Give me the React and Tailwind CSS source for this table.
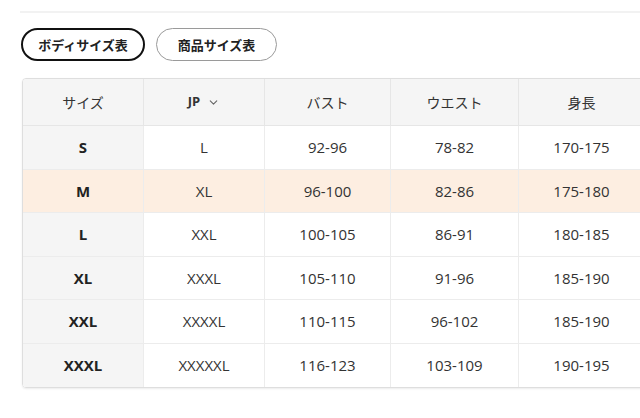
import { ChevronDown } from "lucide-react";

const rows = [
  ["S", "L", "92-96", "78-82", "170-175"],
  ["M", "XL", "96-100", "82-86", "175-180"],
  ["L", "XXL", "100-105", "86-91", "180-185"],
  ["XL", "XXXL", "105-110", "91-96", "185-190"],
  ["XXL", "XXXXL", "110-115", "96-102", "185-190"],
  ["XXXL", "XXXXXL", "116-123", "103-109", "190-195"],
];

const widths = ["w-[121px]", "w-[121px]", "w-[126px]", "w-[128px]", "w-[126px]"];

export default function App() {
  return (
    <div className="w-[640px] h-[418px] overflow-hidden bg-white text-[#333] font-['Open_Sans','Noto_Sans_CJK_JP',sans-serif]">
      <div className="pt-[11px] pl-[20px]">
        <div className="h-[2px] bg-[#f2f2f2]" />
      </div>

      <div className="flex gap-[11px] pl-[21px] pt-[15px]">
        <button className="h-[33px] w-[124px] rounded-full border-2 border-[#111] text-[13px] font-bold text-[#222] font-['Noto_Sans_CJK_JP',sans-serif]">
          ボディサイズ表
        </button>
        <button className="h-[33px] w-[121px] rounded-full border border-[#9a9a9a] text-[13px] font-bold text-[#222] font-['Noto_Sans_CJK_JP',sans-serif]">
          商品サイズ表
        </button>
      </div>

      <div className="pl-[22px] pt-[17px]">
        <div className="w-[700px] rounded-[4px] border border-[#dedede] shadow-[0_1px_2px_rgba(0,0,0,0.08)] overflow-hidden">
          <div className="flex h-[47px] bg-[#f5f5f5] border-b border-[#e6e6e6] text-[14px]">
            {["サイズ", "JP", "バスト", "ウエスト", "身長"].map((h, i) => (
              <div
                key={h}
                className={`${widths[i]} shrink-0 flex items-center justify-center gap-[7px] border-r border-[#e6e6e6] font-['Noto_Sans_CJK_JP',sans-serif] text-[#333] ${i === 1 ? "font-bold" : "font-normal"}`}
              >
                <span className={i === 1 ? "font-['Open_Sans',sans-serif] text-[13px]" : ""}>{h}</span>
                {i === 1 && <ChevronDown className="w-[13px] h-[13px] text-[#666]" strokeWidth={2} />}
              </div>
            ))}
          </div>
          {rows.map((r, ri) => (
            <div
              key={r[0]}
              className={`flex h-[43.5px] text-[15px] ${ri < rows.length - 1 ? "border-b border-[#ececec]" : ""} ${r[0] === "M" ? "bg-[#fdeee1]" : "bg-white"}`}
            >
              {r.map((c, ci) => (
                <div
                  key={ci}
                  className={`${widths[ci]} shrink-0 flex items-center justify-center border-r border-[#ececec] ${ci === 0 ? (r[0] === "M" ? "font-bold text-[#222]" : "bg-[#f5f5f5] font-bold text-[#222]") : "text-[#333]"}`}
                >
                  {c}
                </div>
              ))}
            </div>
          ))}
        </div>
      </div>
    </div>
  );
}
